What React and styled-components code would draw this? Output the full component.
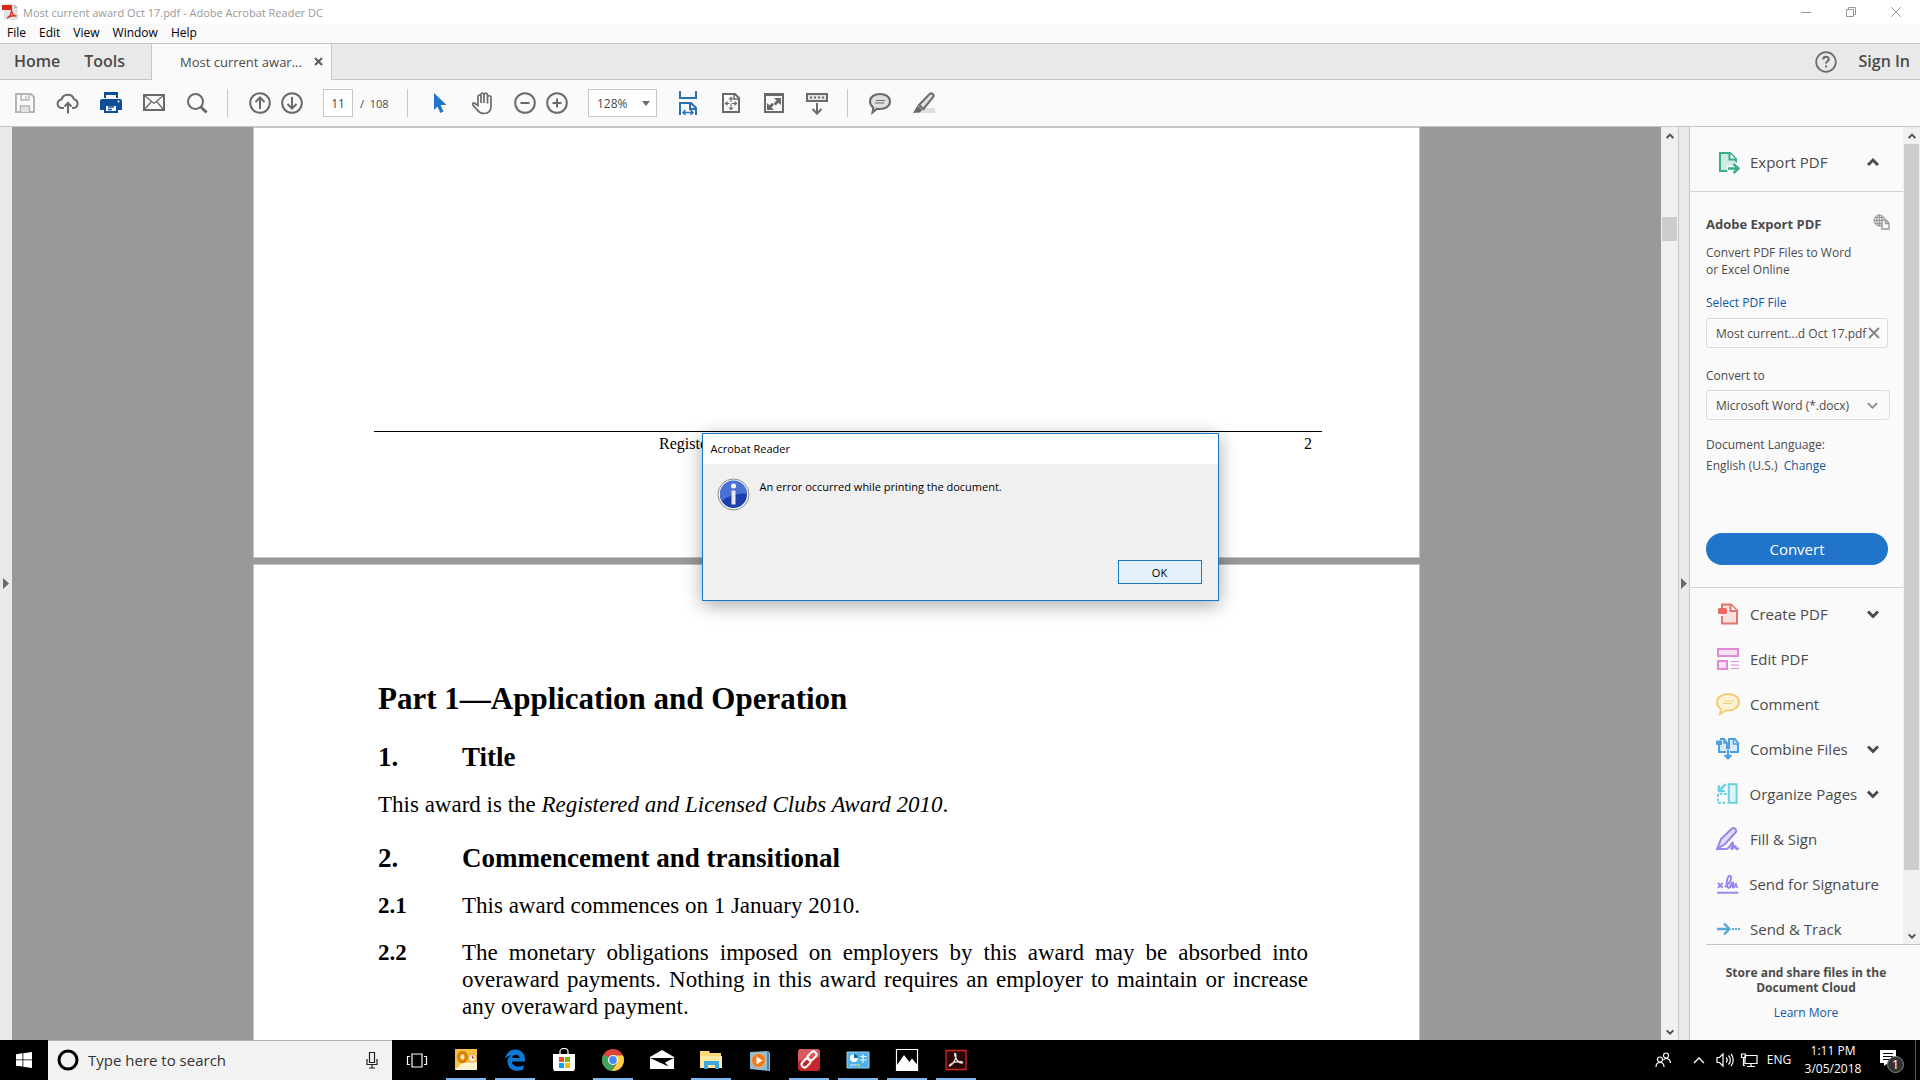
import React, { useState } from 'react';
import styled, { createGlobalStyle } from 'styled-components';

const GlobalStyle = createGlobalStyle`
  * {
    box-sizing: border-box;
  }
  body {
    margin: 0;
    font-family: "Open Sans", "Noto Sans", sans-serif;
    font-size: 12px;
    color: #4b4b4b;
    background: #fafafa;
  }
  button, input, select {
    font-family: inherit;
    color: inherit;
  }
  svg {
    display: block;
  }
`

const Screen = styled.div`
  display: flex;
  flex-direction: column;
  height: 100vh;
  overflow: hidden;
`

const PlainButton = styled.button`
  display: flex;
  align-items: center;
  justify-content: center;
  border: none;
  background: none;
  padding: 0;
`

/* title + menu */

const TitleBar = styled.header`
  display: flex;
  align-items: center;
  height: 24px;
  flex-shrink: 0;
  padding: 0 2px;
  background: #fff;
  color: #999;
`

const TitleText = styled.span`
  flex: 1;
  margin-left: 5px;
  font-size: 11px;
`

const WindowButton = styled(PlainButton)`
  width: 45px;
  height: 20px;
`

const MenuBar = styled.nav`
  display: flex;
  height: 19px;
  flex-shrink: 0;
  padding: 0 0 2px 7px;
  gap: 13px;
`

const MenuItem = styled(PlainButton)`
  font-size: 12px;
  color: #000;
`

/* tabs */

const TabBar = styled.div`
  display: flex;
  align-items: stretch;
  height: 37px;
  flex-shrink: 0;
  background: #e9e9e9;
  border-top: 1px solid #c6c6c6;
  border-bottom: 1px solid #c6c6c6;
`

const MainTabs = styled.div`
  display: flex;
  width: 151px;
  padding-left: 14px;
  gap: 24px;
`

const MainTab = styled(PlainButton)`
  padding-bottom: 2px;
  font-size: 16px;
  font-weight: 600;
`

const FileTab = styled.div`
  display: flex;
  align-items: center;
  justify-content: space-between;
  width: 181px;
  margin-bottom: -1px;
  padding: 0 8px 1px 28px;
  background: #fafafa;
  border-left: 1px solid #c6c6c6;
  border-right: 1px solid #c6c6c6;
  font-size: 13px;
`

const TabEnd = styled.div`
  display: flex;
  align-items: center;
  gap: 22px;
  margin-left: auto;
  padding-right: 10px;
`

/* toolbar */

const Toolbar = styled.div`
  display: flex;
  align-items: center;
  height: 47px;
  flex-shrink: 0;
  padding-left: 3px;
  border-bottom: 1px solid #c6c6c6;
`

const ToolGroup = styled.div`
  display: flex;
  margin-left: ${props => props.$gap || '0'};
`

const ToolButton = styled(PlainButton)`
  width: ${props => props.$tight ? '32px' : '43px'};
  height: 32px;
  color: ${props => props.$color || '#6a6a6a'};
`

const Divider = styled.div`
  width: 1px;
  height: 28px;
  margin: 0 10px 0 9px;
  background: #c6c6c6;
`

const PageInput = styled.input`
  width: 30px;
  height: 28px;
  margin: 0 7px 0 15px;
  padding: 0;
  border: 1px solid #c6c6c6;
  background: #fff;
  font-size: 12px;
  text-align: center;
`

const PageTotal = styled.span`
  width: 38px;
  font-size: 11px;
  white-space: pre;
`

const ZoomBox = styled.div`
  display: flex;
  align-items: center;
  position: relative;
  width: 69px;
  margin: 0 9px 0 15px;
`

const ZoomSelect = styled.select`
  appearance: none;
  width: 100%;
  height: 28px;
  padding: 0 8px;
  border: 1px solid #c6c6c6;
  border-radius: 0;
  background: #fff;
  font-size: 12px;
`

const SelectArrow = styled.span`
  position: absolute;
  right: ${props => props.$right || '7px'};
  pointer-events: none;
`

/* work area */

const Work = styled.div`
  display: flex;
  flex: 1;
  min-height: 0;
`

const SideHandle = styled(PlainButton)`
  width: 12px;
  background: #e9e9e9;
  border: solid #c6c6c6;
  border-width: ${props => props.$lined ? '0 1px' : '0'};
`

const Canvas = styled.main`
  flex: 1;
  display: flex;
  flex-direction: column;
  min-width: 0;
  gap: 6px;
  padding: 0 241px;
  overflow: hidden;
  background: #999;
  font-family: "Liberation Serif", serif;
  color: #000;
`

const Sheet = styled.article`
  flex-shrink: 0;
  background: #fff;
  border: 1px solid #c4c4c4;
`

const PageEnd = styled(Sheet)`
  height: 431px;
  padding: 303px 97px 0 120px;
`

const PageFoot = styled.div`
  display: flex;
  justify-content: space-between;
  border-top: 1px solid #000;
  padding: 3px 10px 0 285px;
  font-size: 16px;
  line-height: 18px;
`

const PageBody = styled(Sheet)`
  height: 600px;
  padding: 116px 111px 0 124px;
  font-size: 23px;
  line-height: 27px;
`

const PartTitle = styled.h1`
  margin: 0 0 24px;
  font-size: 31px;
  line-height: 36px;
`

const Clause = styled.div`
  display: flex;
  margin-bottom: 20px;
`

const ClauseNo = styled.strong`
  width: 84px;
  flex-shrink: 0;
`

const ClauseTitle = styled.h2`
  display: flex;
  margin: 0 0 18px;
  font-size: 27px;
  line-height: 32px;
`

const ClauseText = styled.p`
  margin: ${props => props.$gap ? '0 0 24px' : '0'};
  text-align: justify;
`

/* scrollbars */

const ScrollTrack = styled.div`
  display: flex;
  flex-direction: column;
  align-items: center;
  width: 17px;
  flex-shrink: 0;
  background: #f0f0f0;
`

const ScrollArrow = styled(PlainButton)`
  width: 17px;
  height: 17px;
  color: #505050;
`

const Thumb = styled.div`
  width: 15px;
  height: ${props => props.$height};
  margin-top: ${props => props.$top || '0'};
  margin-bottom: auto;
  background: #cdcdcd;
`

/* right panel */

const Panel = styled.aside`
  display: flex;
  flex-direction: column;
  width: 230px;
  flex-shrink: 0;
`

const PanelTop = styled.div`
  display: flex;
  flex: 1;
  min-height: 0;
`

const PanelMain = styled.div`
  flex: 1;
  min-width: 0;
  overflow: hidden;
`

const PanelRow = styled.button`
  display: flex;
  align-items: center;
  width: 100%;
  height: ${props => props.$head ? '65px' : '45px'};
  padding: ${props => props.$head ? '6px 24px 0 26px' : '0 24px 0 26px'};
  gap: 10px;
  border: none;
  border-bottom: ${props => props.$head ? '1px solid #d3d3d3' : 'none'};
  background: none;
  font-size: 15px;
  text-align: left;
  white-space: nowrap;
`

const RowLabel = styled.span`
  flex: 1;
`

const ExportForm = styled.form`
  display: flex;
  flex-direction: column;
  padding: 22px 13px 22px 16px;
  border-bottom: 1px solid #d3d3d3;
  font-size: 12px;
  line-height: 17px;
`

const ExportTitle = styled.div`
  display: flex;
  justify-content: space-between;
  height: 30px;
  font-size: 13px;
  line-height: 20px;
  font-weight: 700;
`

const FormText = styled.p`
  margin: 0 0 16px;
`

const Link = styled.a`
  color: #1358a0;
  text-decoration: none;
`

const FieldLabel = styled.label`
  margin: 19px 0 6px;
`

const FileField = styled.div`
  display: flex;
  align-items: center;
  justify-content: space-between;
  height: 30px;
  margin: 7px 2px 0 0;
  padding: 0 7px 0 9px;
  border: 1px solid #dcdcdc;
  border-radius: 3px;
  white-space: nowrap;
`

const FormatBox = styled.div`
  display: flex;
  align-items: center;
  position: relative;
  margin-bottom: 14px;
`

const FormatSelect = styled.select`
  appearance: none;
  width: 100%;
  height: 30px;
  padding: 0 9px;
  border: 1px solid #dcdcdc;
  border-radius: 3px;
  background: #fafafa;
  font-size: 12px;
`

const Language = styled.p`
  margin: 0 0 57px;
  line-height: 21px;
`

const ConvertButton = styled.button`
  height: 32px;
  margin-right: 2px;
  border: none;
  border-radius: 16px;
  background: #2074c9;
  color: #fff;
  font-size: 15px;
`

const ToolList = styled.div`
  padding-top: 3px;
`

const PanelFoot = styled.div`
  height: 96px;
  margin-left: 16px;
  padding: 20px 14px 0 0;
  border-top: 1px solid #c6c6c6;
  font-size: 12px;
  line-height: 15px;
  text-align: center;
`

const FootTitle = styled.strong`
  display: block;
  margin-bottom: 10px;
`

/* dialog */

const Overlay = styled.div`
  position: absolute;
  inset: 433px 0 auto;
  display: flex;
  justify-content: center;
`

const Dialog = styled.div`
  display: flex;
  flex-direction: column;
  width: 517px;
  height: 168px;
  border: 1px solid #1979c0;
  background: #f0f0f0;
  box-shadow: 0 4px 18px rgba(0, 0, 0, 0.35);
  color: #000;
  font-size: 11px;
`

const DialogTitle = styled.div`
  height: 30px;
  padding-left: 8px;
  background: #fff;
  line-height: 30px;
`

const DialogBody = styled.div`
  display: flex;
  flex: 1;
  gap: 10px;
  padding: 14px;
`

const DialogText = styled.p`
  margin: 0;
  line-height: 18px;
`

const DialogActions = styled.div`
  display: flex;
  justify-content: flex-end;
  padding: 0 16px 16px;
`

const OkButton = styled.button`
  width: 84px;
  height: 24px;
  padding: 0;
  border: 1px solid #1979c0;
  background: #e3f0fa;
  font-size: 11px;
`

/* taskbar */

const Taskbar = styled.footer`
  display: flex;
  height: 40px;
  flex-shrink: 0;
  background: #000;
  color: #fff;
`

const StartButton = styled(PlainButton)`
  width: 48px;
`

const SearchBox = styled.div`
  display: flex;
  align-items: center;
  width: 344px;
  padding: 0 14px 1px 9px;
  gap: 9px;
  background: #f2f2f2;
  border-top: 1px solid #b4b4b4;
  color: #222;
`

const SearchInput = styled.input`
  flex: 1;
  min-width: 0;
  padding: 0;
  border: none;
  background: none;
  font-size: 15px;

  &::placeholder {
    color: #333;
    opacity: 1;
  }
`

const TaskButton = styled(PlainButton)`
  width: 49px;
  height: 40px;
  color: #fff;
  background: ${props => props.$open
    ? 'linear-gradient(#7fb9f0, #7fb9f0) center bottom / 40px 2px no-repeat'
    : 'none'};
`

const Tray = styled.div`
  display: flex;
  align-items: center;
  margin-left: auto;
`

const TrayButton = styled(PlainButton)`
  width: ${props => props.$width || '24px'};
  height: 40px;
  color: #fff;
  font-size: 12px;
  line-height: 18px;
`

const NotifyButton = styled(TrayButton)`
  border-right: 1px solid #555;
  margin-right: 4px;
  padding-right: 2px;
`

const Icon = ({ w = 24, h = 24, children }) => (
  <svg width={w} height={h} viewBox={`0 0 ${w} ${h}`} fill="none" stroke="currentColor" strokeWidth="2" aria-hidden="true">
    {children}
  </svg>
)

const Chevron = ({ up, size = 12, color = '#4b4b4b', width = 3 }) => (
  <svg width={size} height={size} viewBox="0 0 12 12" fill="none" stroke={color} strokeWidth={width} aria-hidden="true">
    <path d={up ? 'M1 9l5-5 5 5' : 'M1 3.500l5 5 5-5'} />
  </svg>
)

const icons = {
  save: (
    <Icon>
      <path d="M3 3h15l3 3v15H3z" />
      <path d="M8 3v6h8V3M13 5v3" strokeWidth="1.500" />
      <path d="M7.500 21v-6h9v6" fill="#e4e4e4" strokeWidth="1.500" />
    </Icon>
  ),
  cloud: (
    <Icon>
      <path d="M8 17H6a4.200 4.200 0 0 1-.5-8.400A6.500 6.500 0 0 1 18 8.200a4.500 4.500 0 0 1 0 8.800h-2" />
      <path d="M12 22.500V12M8.500 15.500L12 12l3.500 3.500" />
    </Icon>
  ),
  print: (
    <Icon>
      <path d="M5 1h14v6H5z" fill="#0c4f96" stroke="none" />
      <path d="M7 4h10v4H7z" fill="#fafafa" stroke="none" />
      <path d="M3 8h18a2 2 0 0 1 2 2v9H1v-9a2 2 0 0 1 2-2z" fill="#0c4f96" stroke="none" />
      <path d="M6 14h12v7H6z" fill="#fafafa" stroke="#0c4f96" />
      <path d="M9 16h6M9 18.500h4" stroke="#0c4f96" strokeWidth="1.300" />
      <circle cx="19.500" cy="10.500" r="1" fill="#fff" stroke="none" />
    </Icon>
  ),
  mail: (
    <Icon>
      <path d="M2 4h20v15H2z" />
      <path d="M2 4l10 8.500L22 4M2 19l7.500-8.500M22 19l-7.500-8.500" strokeWidth="1.300" />
    </Icon>
  ),
  search: (
    <Icon>
      <circle cx="10.500" cy="10.500" r="7.500" />
      <path d="M16 16l5.500 5.500" strokeWidth="3" />
    </Icon>
  ),
  up: (
    <Icon>
      <circle cx="12" cy="12" r="9.800" />
      <path d="M12 18V7M7.500 11L12 6.500l4.500 4.500" />
    </Icon>
  ),
  down: (
    <Icon>
      <circle cx="12" cy="12" r="9.800" />
      <path d="M12 6v11M7.500 13l4.500 4.500 4.500-4.500" />
    </Icon>
  ),
  cursor: (
    <Icon>
      <path d="M6 2l12.500 12h-6l3 6.500-3 1.500-3-6.500L6 19z" fill="currentColor" stroke="none" />
    </Icon>
  ),
  hand: (
    <Icon>
      <path d="M7 14.500V5.500a1.500 1.500 0 0 1 3 0V12V3.500a1.500 1.500 0 0 1 3 0V12V4a1.500 1.500 0 0 1 3.500 0v8.500V6.500a1.500 1.500 0 0 1 3.500 0V15c0 5-3 7.500-7 7.500-3.500 0-5.500-1.500-7-4L1.800 14c-.8-1.800 1-2.800 2.200-1.500z" strokeWidth="1.700" />
    </Icon>
  ),
  minus: (
    <Icon>
      <circle cx="12" cy="12" r="9.800" />
      <path d="M7.500 12h9" />
    </Icon>
  ),
  plus: (
    <Icon>
      <circle cx="12" cy="12" r="9.800" />
      <path d="M7.500 12h9M12 7.500v9" />
    </Icon>
  ),
  fitWidth: (
    <Icon>
      <path d="M4 0v7h16V0M4 24V12h11l5 5v7M14 12v6h6" />
      <path d="M7.500 21.500h9M9.500 19l-2.500 2.500 2.500 2.500M14.500 19l2.500 2.500-2.500 2.500" strokeWidth="1.500" />
    </Icon>
  ),
  fitPage: (
    <Icon>
      <path d="M4 3h12l4 4v14H4z" />
      <path d="M15 3v5h5" strokeWidth="1.500" />
      <path d="M12 7.500v9M7 12.500h10" strokeWidth="1" strokeDasharray="3.500 2" />
      <path d="M12 5.500l2.500 3h-5zM12 19.500l2.500-3h-5zM5.500 12.500l3-2.500v5zM18.500 12.500l-3-2.500v5z" fill="currentColor" stroke="none" />
    </Icon>
  ),
  full: (
    <Icon>
      <path d="M3 3h18v18H3z" />
      <path d="M2 3.500h20" strokeWidth="3" />
      <path d="M12 7h7v7l-2.500-2.300-2.800 2.800-2-2L14.500 9.500zM12 19H5v-7l2.500 2.300 2.500-2.500 2 2-2.500 2.700z" fill="currentColor" stroke="none" />
    </Icon>
  ),
  ruler: (
    <Icon>
      <path d="M2 3h20v7H2z" fill="#e4e4e4" />
      <path d="M5 6.500h15" strokeDasharray="2 2" />
      <path d="M12 12v10M7.500 18l4.500 4.500 4.500-4.500" />
    </Icon>
  ),
  comment: (
    <Icon>
      <path d="M12 3c6 0 10 3.200 10 7.500S18 18 12 18c-1 0-2-.1-3-.3L4.500 21.500l.8-5C3.200 15 2 13 2 10.500 2 6.200 6 3 12 3z" fill="#dedede" />
      <path d="M8 9.500h9M7 12h9" strokeWidth="1.200" />
    </Icon>
  ),
  marker: (
    <Icon>
      <path d="M7 17h17v5H7z" fill="#dedede" stroke="none" />
      <path d="M8 14L18.500 3.200a2.300 2.300 0 0 1 3.500 3L12.500 18z" fill="#dedede" />
      <path d="M6.500 14.500l5 4.500-3 2.500-6.500.5z" fill="currentColor" stroke="none" />
    </Icon>
  ),
}

const panelIcons = {
  export: (
    <Icon>
      <path d="M12 21H4V3h10l6 6v4" stroke="#3aac8e" fill="#cdeae3" />
      <path d="M13.500 3v6.500H20" stroke="#3aac8e" fill="#fafafa" />
      <path d="M11 18.500h11M17.500 14l5 4.500-5 4.500" stroke="#fafafa" strokeWidth="6" />
      <path d="M12 18.500h10M17.500 14l5 4.500-5 4.500" stroke="#3aac8e" strokeWidth="2.400" />
    </Icon>
  ),
  create: (
    <Icon>
      <path d="M6 9V2.500h9l6 6V21.500H6V14" stroke="#e2766c" fill="#fbe0dd" />
      <path d="M14.500 3v6H21" stroke="#e2766c" fill="#fafafa" />
      <rect x="2" y="6" width="9" height="6" rx="1.500" fill="#ec6a62" stroke="none" />
    </Icon>
  ),
  edit: (
    <Icon>
      <path d="M2 2h20v7H2zM2 14h9v8H2z" stroke="#e08ad6" fill="#f8e2f5" />
      <path d="M15 14.500h8M15 18h8M15 21.500h8" stroke="#e08ad6" strokeWidth="1.200" />
    </Icon>
  ),
  comment: (
    <Icon>
      <path d="M12 2c6.500 0 11 3.400 11 8s-4.500 8.500-11 8.500l-2 0L4 22l1-5C2.500 15.300 1 13 1 10.500 1 5.500 5.500 2 12 2z" stroke="#f3cd72" fill="#fdf2d6" />
      <path d="M8 9h10M7 11.500h9" stroke="#f3cd72" strokeWidth="1.200" />
    </Icon>
  ),
  combine: (
    <Icon>
      <path d="M3 8v7h8V6L8 2H4M13 15h9V6l-3-4h-6z" stroke="#4f9fdf" fill="#d9eafa" />
      <path d="M17.500 2v5H22M8 2v4h3" stroke="#4f9fdf" strokeWidth="1.500" />
      <rect x="0" y="3.500" width="6" height="4.500" rx="1" fill="#4f9fdf" stroke="none" />
      <path d="M10.500 12.500h3v5h4l-5.500 6-5.500-6h4z" fill="#4f9fdf" stroke="#fafafa" strokeWidth=".8" />
    </Icon>
  ),
  organize: (
    <Icon>
      <path d="M13 2h8v19h-8z" stroke="#6ad0e0" fill="#dcf4f8" />
      <path d="M11 12H2v9h9" stroke="#6ad0e0" strokeDasharray="3 1.500" />
      <path d="M3 3v6h6M4 8l6-6" stroke="#6ad0e0" strokeWidth="2.400" />
    </Icon>
  ),
  fill: (
    <Icon>
      <path d="M1 22L5 12 15.500 2a2.500 2.500 0 0 1 4 3.500L9 17z" stroke="#9388ea" fill="#e0dcfb" />
      <path d="M1 22h9c3 0 5-5 6-6s2 1 0 4 1 2 2 0 2-1 2 1 1 1 3 0" stroke="#9388ea" />
    </Icon>
  ),
  signature: (
    <Icon>
      <path d="M1 21h22" stroke="#9388ea" />
      <path d="M2 11l5 5M7 11l-5 5" stroke="#9388ea" />
      <path d="M9 15c5-3 8-9 6-11s-4 3-4 8 3.500 5 4.500 1 3.500-3 2 0 1 4 2.500 0 0 3 2.500 2" stroke="#9388ea" />
    </Icon>
  ),
  track: (
    <Icon>
      <path d="M1 12h12M8 6.500l5.500 5.500L8 17.500" stroke="#58a9d6" strokeWidth="2.400" />
      <path d="M16 12h8" stroke="#58a9d6" strokeDasharray="2 1" />
    </Icon>
  ),
}

const taskIcons = {
  view: (
    <Icon>
      <path d="M7 6h10v13H7zM5 8.500H2.500v8H5M19 8.500h2.500v8H19" strokeWidth="1.200" />
    </Icon>
  ),
  outlook: (
    <Icon>
      <path d="M1 1h22v21H1z" fill="#f3c044" stroke="none" />
      <path d="M1 22l7-7 15-1v8z" fill="#fff3cf" stroke="none" />
      <ellipse cx="8.500" cy="9" rx="3.800" ry="4.500" stroke="#d9820b" strokeWidth="3.500" fill="#fbe6b0" />
      <circle cx="18.500" cy="10" r="4" fill="#fdf1d0" stroke="#e0a030" strokeWidth="1" />
      <path d="M18.500 7.500V10h2" stroke="#c0392b" strokeWidth="1" />
    </Icon>
  ),
  edge: (
    <Icon>
      <path d="M2 11C3 5 7 1.500 12.500 1.500c6 0 9.500 4.500 9.500 9.500v2.500H9c0 5 7 6.500 11.500 3.500v4.500C13 25 4.500 21.500 4.500 13.500 4.500 10 6.500 8 9 7c-3 .3-5.500 2-7 4zM9 10h7.500C16.500 5.500 9.500 5.500 9 10z" fill="#0a7ad6" stroke="none" />
    </Icon>
  ),
  store: (
    <Icon>
      <path d="M1 6h22v14l-1 3H2l-1-3z" fill="#fff" stroke="none" />
      <path d="M8 7V3.500a4 3 0 0 1 8 0V7" strokeWidth="1.200" />
      <path d="M7 9h5v5H7z" fill="#f25022" stroke="none" />
      <path d="M13 9h5v5h-5z" fill="#7fba00" stroke="none" />
      <path d="M7 15h5v5H7z" fill="#00a4ef" stroke="none" />
      <path d="M13 15h5v5h-5z" fill="#ffb900" stroke="none" />
    </Icon>
  ),
  chrome: (
    <Icon>
      <circle cx="12" cy="12" r="11" fill="#db4437" stroke="none" />
      <path d="M2.500 6.500A11 11 0 0 0 11 23l5-9z" fill="#3da35d" stroke="none" />
      <path d="M11 23A11 11 0 0 0 22 7.500H12l4.500 7z" fill="#ffcd40" stroke="none" />
      <circle cx="12" cy="12" r="4.500" fill="#4a8af4" stroke="#fff" strokeWidth="1.200" />
    </Icon>
  ),
  mail: (
    <Icon>
      <path d="M0 9l12-7 12 7v12H0z" fill="#fff" stroke="none" />
      <path d="M0 10h24l-9 4.500 3.500 4z" fill="#000" stroke="none" />
    </Icon>
  ),
  explorer: (
    <Icon>
      <path d="M1 3h9l1 2h11v15H1z" fill="#f7d977" stroke="none" />
      <path d="M1 8h22v12H1z" fill="#fbe9a4" stroke="none" />
      <path d="M5 21v-8h15v8h-4v-4H9v4z" fill="#3ea6d8" stroke="none" />
    </Icon>
  ),
  player: (
    <Icon>
      <path d="M2 4l18-1 2 2v18l-20-2z" fill="#8fbdd8" stroke="none" />
      <path d="M20 3v19" stroke="#4a86ad" />
      <circle cx="10.500" cy="12.500" r="7" fill="#ee7a1e" stroke="#f7b683" strokeWidth="1" />
      <path d="M8.500 8.500l6 4-6 4z" fill="#fff" stroke="none" />
    </Icon>
  ),
  link: (
    <Icon>
      <rect x="1" y="1" width="22" height="22" rx="3" fill="#c6252c" stroke="none" />
      <path d="M4 1h16a3 3 0 0 1 3 3v5L1 13V4a3 3 0 0 1 3-3z" fill="#d65a5e" stroke="none" />
      <rect x="12" y="3" width="6" height="10" rx="3" transform="rotate(45 15 8)" stroke="#fff" />
      <rect x="6" y="10" width="6" height="10" rx="3" transform="rotate(45 9 15)" stroke="#fff" />
    </Icon>
  ),
  control: (
    <Icon>
      <path d="M1 4h22v16H1z" fill="#4db2e8" stroke="#9bd6f3" strokeWidth="1" />
      <circle cx="8" cy="10" r="4" fill="#fff" stroke="none" />
      <path d="M8 10V6a4 4 0 0 1 4 4z" fill="#1a5fa0" stroke="none" />
      <path d="M14 8.500h7M14 12h7M4 17h7M17 6v9" stroke="#dff2fc" strokeWidth="1.200" />
      <path d="M12 17h2" stroke="#f5c542" />
    </Icon>
  ),
  photos: (
    <Icon>
      <path d="M1.500 1.500h21v21h-21z" strokeWidth="1.200" />
      <path d="M2 17l7-10 5.500 7 2.500-3.500 5 6V22H2z" fill="#fff" stroke="none" />
    </Icon>
  ),
  acrobat: (
    <Icon>
      <path d="M2 2.500h20v19H2z" fill="#2b0505" stroke="#cf2a1e" strokeWidth="1.300" />
      <path d="M6 18c4-2 7-9 5.500-12.500-1.500-1-1 3 1.500 6.500s5.500 3.500 5.500 2.500c0-1.500-7-1-10 .5s-4 3.500-2.500 3z" stroke="#e8e0e0" strokeWidth="1.300" />
    </Icon>
  ),
}

const leftTools = [
  ['Save', 'save', '#b5b5b5'],
  ['Upload', 'cloud'],
  ['Print', 'print'],
  ['Email', 'mail'],
  ['Find', 'search'],
]

const viewTools = [
  ['Fit width', 'fitWidth', '#2a72b8'],
  ['Fit page', 'fitPage'],
  ['Full screen', 'full'],
  ['Read mode', 'ruler'],
]

const panelTools = [
  ['Create PDF', 'create', true],
  ['Edit PDF', 'edit'],
  ['Comment', 'comment'],
  ['Combine Files', 'combine', true],
  ['Organize Pages', 'organize', true],
  ['Fill & Sign', 'fill'],
  ['Send for Signature', 'signature'],
  ['Send & Track', 'track'],
]

const taskApps = [
  ['Task View', 'view'],
  ['Outlook', 'outlook', true],
  ['Edge', 'edge', true],
  ['Store', 'store'],
  ['Chrome', 'chrome', true],
  ['Mail', 'mail'],
  ['File Explorer', 'explorer', true],
  ['Media Player', 'player'],
  ['Remote', 'link', true],
  ['Control Panel', 'control', true],
  ['Photos', 'photos', true],
  ['Acrobat Reader', 'acrobat', true],
]

const Tool = ({ item, tight }) => (
  <ToolButton aria-label={item[0]} $color={item[2]} $tight={tight}>{icons[item[1]]}</ToolButton>
)

const Header = () => (
  <>
    <TitleBar>
      <svg width="16" height="16" viewBox="0 0 16 16" aria-hidden="true">
        <path d="M2 0h10l4 4v12H2z" fill="#e3e3e3" />
        <path d="M12 0v4h4z" fill="#b9b9b9" />
        <path d="M0 1h10v5H0z" fill="#d8291c" />
        <path d="M5 14c3-1.500 4.500-5 4.500-8 0 3 2 6 5 6-3-.5-7 0-9.500 2z" fill="none" stroke="#d8291c" strokeWidth="1.300" />
      </svg>
      <TitleText>Most current award Oct 17.pdf - Adobe Acrobat Reader DC</TitleText>
      <WindowButton aria-label="Minimize">
        <Icon w={12} h={12}><path d="M1 6.500h10" strokeWidth="1" /></Icon>
      </WindowButton>
      <WindowButton aria-label="Restore">
        <Icon w={12} h={12}><path d="M1.500 3.500h7v7h-7zM3.500 3.500v-2h7v7h-2" strokeWidth="1" /></Icon>
      </WindowButton>
      <WindowButton aria-label="Close">
        <Icon w={12} h={12}><path d="M1 1l10 10M11 1L1 11" strokeWidth="1" /></Icon>
      </WindowButton>
    </TitleBar>
    <MenuBar>
      {['File', 'Edit', 'View', 'Window', 'Help'].map(name => <MenuItem key={name}>{name}</MenuItem>)}
    </MenuBar>
    <TabBar>
      <MainTabs>
        <MainTab>Home</MainTab>
        <MainTab>Tools</MainTab>
      </MainTabs>
      <FileTab>
        Most current awar...
        <PlainButton aria-label="Close tab">
          <Icon w={9} h={9}><path d="M1 1l7 7M8 1L1 8" stroke="#5a5a5a" /></Icon>
        </PlainButton>
      </FileTab>
      <TabEnd>
        <PlainButton aria-label="Help">
          <Icon w={22} h={22}>
            <circle cx="11" cy="11" r="9.800" stroke="#6a6a6a" strokeWidth="1.700" />
            <path d="M8.200 8.500c0-3.500 5.600-3.500 5.600-.3 0 2-2.800 2-2.800 4.300M11 14.500v2" stroke="#6a6a6a" />
          </Icon>
        </PlainButton>
        <MainTab>Sign In</MainTab>
      </TabEnd>
    </TabBar>
  </>
)

const Tools = () => {
  const [page, setPage] = useState('11')
  return (
    <Toolbar>
      {leftTools.map(item => <Tool key={item[0]} item={item} />)}
      <Divider />
      <ToolGroup $gap="6px">
        <Tool item={['Previous page', 'up']} tight />
        <Tool item={['Next page', 'down']} tight />
      </ToolGroup>
      <PageInput aria-label="Page" value={page} onChange={e => setPage(e.target.value)} />
      <PageTotal>/  108</PageTotal>
      <Divider />
      <Tool item={['Select', 'cursor', '#2074c9']} />
      <Tool item={['Hand', 'hand']} />
      <ToolGroup $gap="5px">
        <Tool item={['Zoom out', 'minus']} tight />
        <Tool item={['Zoom in', 'plus']} tight />
      </ToolGroup>
      <ZoomBox>
        <ZoomSelect aria-label="Zoom" defaultValue="128%">
          <option>128%</option>
        </ZoomSelect>
        <SelectArrow>
          <svg width="8" height="5"><path d="M0 0h8L4 5z" fill="#6a6a6a" /></svg>
        </SelectArrow>
      </ZoomBox>
      {viewTools.map(item => <Tool key={item[0]} item={item} />)}
      <Divider />
      <Tool item={['Add comment', 'comment']} />
      <Tool item={['Highlight', 'marker']} />
    </Toolbar>
  )
}

const Document = () => (
  <Canvas>
    <PageEnd>
      <PageFoot>
        <span>Registe</span>
        <span>2</span>
      </PageFoot>
    </PageEnd>
    <PageBody>
      <PartTitle>Part 1—Application and Operation</PartTitle>
      <ClauseTitle><ClauseNo>1.</ClauseNo>Title</ClauseTitle>
      <ClauseText $gap>This award is the <em>Registered and Licensed Clubs Award 2010</em>.</ClauseText>
      <ClauseTitle><ClauseNo>2.</ClauseNo>Commencement and transitional</ClauseTitle>
      <Clause>
        <ClauseNo>2.1</ClauseNo>
        <ClauseText>This award commences on 1 January 2010.</ClauseText>
      </Clause>
      <Clause>
        <ClauseNo>2.2</ClauseNo>
        <ClauseText>
          The monetary obligations imposed on employers by this award may be absorbed into
          overaward payments. Nothing in this award requires an employer to maintain or increase
          any overaward payment.
        </ClauseText>
      </Clause>
    </PageBody>
  </Canvas>
)

const Scroll = ({ height, top }) => (
  <ScrollTrack>
    <ScrollArrow aria-label="Scroll up"><Chevron up size={8} color="#505050" /></ScrollArrow>
    <Thumb $height={height} $top={top} />
    <ScrollArrow aria-label="Scroll down"><Chevron size={8} color="#505050" /></ScrollArrow>
  </ScrollTrack>
)

const HandleArrow = () => (
  <svg width="6" height="11"><path d="M0 0l6 5.500L0 11z" fill="#6a6a6a" /></svg>
)

const SidePanel = () => (
  <Panel>
    <PanelTop>
      <PanelMain>
        <PanelRow $head>
          {panelIcons.export}
          <RowLabel>Export PDF</RowLabel>
          <Chevron up />
        </PanelRow>
        <ExportForm onSubmit={e => e.preventDefault()}>
          <ExportTitle>
            Adobe Export PDF
            <Icon w={17} h={16}>
              <g stroke="#999" strokeWidth="1">
                <circle cx="6.500" cy="6.500" r="5.500" fill="#e0e0e0" />
                <path d="M1 6.500h11M6.500 1v11M2 3.500h9M2 9.500h9" />
                <ellipse cx="6.500" cy="6.500" rx="2.800" ry="5.500" />
                <path d="M9 6h4l3 3v6H9zM12.500 6v3.500H16" fill="#fafafa" strokeWidth="1.400" />
              </g>
            </Icon>
          </ExportTitle>
          <FormText>Convert PDF Files to Word<br />or Excel Online</FormText>
          <Link href="#select">Select PDF File</Link>
          <FileField>
            Most current...d Oct 17.pdf
            <PlainButton type="button" aria-label="Remove file">
              <Icon w={12} h={12}><path d="M1 1l10 10M11 1L1 11" stroke="#888" /></Icon>
            </PlainButton>
          </FileField>
          <FieldLabel htmlFor="format">Convert to</FieldLabel>
          <FormatBox>
            <FormatSelect id="format" defaultValue="docx">
              <option value="docx">Microsoft Word (*.docx)</option>
            </FormatSelect>
            <SelectArrow $right="12px"><Chevron size={11} color="#888" width={2} /></SelectArrow>
          </FormatBox>
          <Language>
            Document Language:<br />
            English (U.S.)&nbsp; <Link href="#language">Change</Link>
          </Language>
          <ConvertButton>Convert</ConvertButton>
        </ExportForm>
        <ToolList>
          {panelTools.map(([name, icon, more]) => (
            <PanelRow key={name}>
              {panelIcons[icon]}
              <RowLabel>{name}</RowLabel>
              {more && <Chevron />}
            </PanelRow>
          ))}
        </ToolList>
      </PanelMain>
      <Scroll height="726px" />
    </PanelTop>
    <PanelFoot>
      <FootTitle>Store and share files in the Document Cloud</FootTitle>
      <Link href="#more">Learn More</Link>
    </PanelFoot>
  </Panel>
)

const ErrorDialog = () => (
  <Overlay>
    <Dialog role="dialog" aria-labelledby="dialog-title">
      <DialogTitle id="dialog-title">Acrobat Reader</DialogTitle>
      <DialogBody>
        <svg width="33" height="33" viewBox="0 0 33 33" aria-hidden="true">
          <circle cx="16.500" cy="16.500" r="15.500" fill="#f4f4f4" stroke="#8a8a8a" />
          <circle cx="16.500" cy="16.500" r="13.500" fill="#1d3fae" />
          <path d="M3 16.500a13.500 13.500 0 0 1 27-1C22 15 10 17 5 23.500a13 13 0 0 1-2-7z" fill="#4a72d4" />
          <circle cx="16.500" cy="8" r="2.500" fill="#fff" />
          <path d="M14.500 12.500h4v14h-4z" fill="#e6e9f2" />
        </svg>
        <DialogText>An error occurred while printing the document.</DialogText>
      </DialogBody>
      <DialogActions>
        <OkButton>OK</OkButton>
      </DialogActions>
    </Dialog>
  </Overlay>
)

const TaskRow = () => (
  <Taskbar>
    <StartButton aria-label="Start">
      <svg width="16" height="16" viewBox="0 0 16 16" fill="#fff" aria-hidden="true">
        <path d="M0 2.200l6.500-.9v6.200H0zM7.300 1.200L16 0v7.500H7.300zM0 8.300h6.500v6.300L0 13.700zM7.300 8.300H16V16l-8.700-1.200z" />
      </svg>
    </StartButton>
    <SearchBox>
      <Icon w={22} h={22}><circle cx="11" cy="11" r="9" stroke="#000" strokeWidth="3" /></Icon>
      <SearchInput aria-label="Search" placeholder="Type here to search" />
      <Icon w={12} h={18}>
        <path d="M3.500 1.500h5v10h-5zM1 8v5.500h10V8M6 14v3M3 17h6" strokeWidth="1.200" />
      </Icon>
    </SearchBox>
    {taskApps.map(([name, icon, open]) => (
      <TaskButton key={name} aria-label={name} $open={open}>{taskIcons[icon]}</TaskButton>
    ))}
    <Tray>
      <TrayButton $width="44px" aria-label="People">
        <Icon w={16} h={16}>
          <g strokeWidth="1.200">
            <circle cx="5" cy="7.500" r="2.500" />
            <path d="M1 15c0-6 8-6 8 0" />
            <circle cx="11" cy="3.500" r="2.500" />
            <path d="M8.500 8c2.500-3 7-1 7 3" />
          </g>
        </Icon>
      </TrayButton>
      <TrayButton $width="28px" aria-label="Hidden icons"><Chevron up color="#fff" width={1.300} /></TrayButton>
      <TrayButton aria-label="Volume">
        <Icon w={18} h={16}>
          <path d="M1 5.500h2.500L7 2v12l-3.500-3.500H1zM10 5.500c1.500 1.500 1.500 3.500 0 5M12.500 3.500c2.500 2.500 2.500 6.500 0 9M15 2c3 3.500 3 8.500 0 12" strokeWidth="1.200" />
        </Icon>
      </TrayButton>
      <TrayButton aria-label="Network">
        <Icon w={18} h={16}>
          <path d="M5 3.500h12v8H5zM11 11.500v3M7 14.500h8M1.500 2h4v3.500h-4zM3.500 5.500v8H5" strokeWidth="1.200" />
        </Icon>
      </TrayButton>
      <TrayButton $width="36px">ENG</TrayButton>
      <TrayButton $width="72px"><span>1:11 PM<br />3/05/2018</span></TrayButton>
      <NotifyButton $width="47px" aria-label="Notifications, 1 new">
        <svg width="26" height="26" viewBox="0 0 26 26" aria-hidden="true">
          <path d="M2 3h16v13h-8l-4 3v-3H2z" fill="#fff" />
          <path d="M5 6.500h10M5 9.500h10M5 12.500h7" stroke="#000" strokeWidth="1.200" />
          <circle cx="17.500" cy="17.500" r="8" fill="#333" stroke="#888" />
          <text x="17.500" y="22" fill="#fff" fontSize="13" textAnchor="middle">1</text>
        </svg>
      </NotifyButton>
    </Tray>
  </Taskbar>
)

const App = () => (
  <Screen>
    <GlobalStyle />
    <Header />
    <Tools />
    <Work>
      <SideHandle aria-label="Show navigation pane"><HandleArrow /></SideHandle>
      <Document />
      <Scroll height="24px" top="73px" />
      <SideHandle $lined aria-label="Hide tools pane"><HandleArrow /></SideHandle>
      <SidePanel />
    </Work>
    <TaskRow />
    <ErrorDialog />
  </Screen>
)

export default App
